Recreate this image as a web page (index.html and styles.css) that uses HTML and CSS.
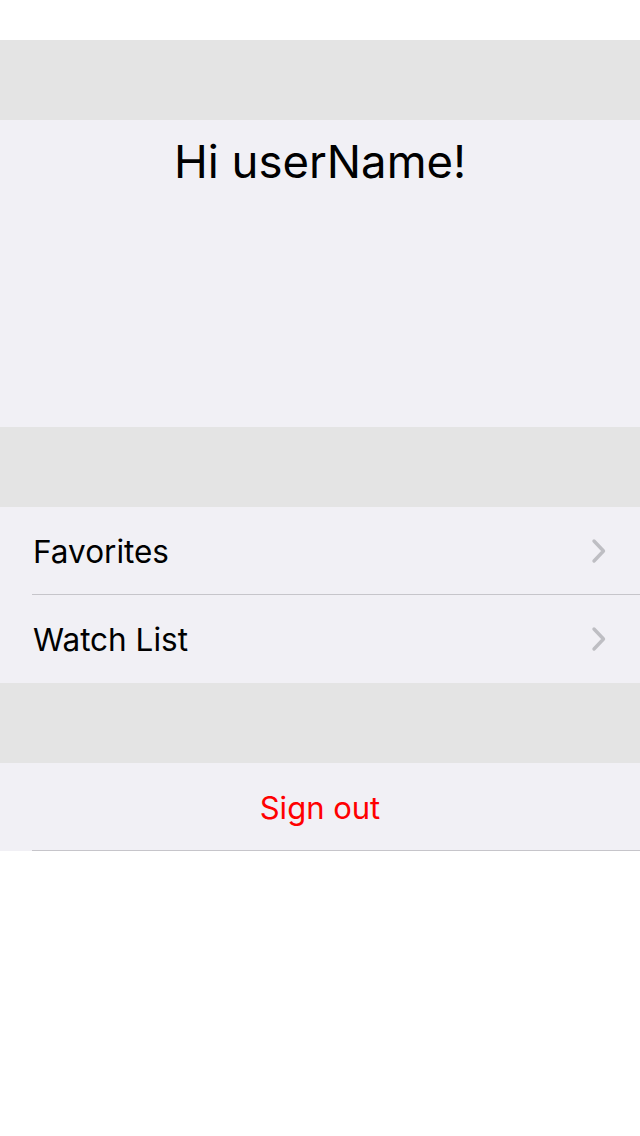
FILE: index.html
```html
<!DOCTYPE html>
<html>
<head>
<meta charset="utf-8">
<link rel="stylesheet" href="styles.css">
</head>
<body>
<div class="page">
  <div class="status"></div>
  <div class="spacer"></div>
  <div class="header">
    <h1 class="greeting">Hi userName!</h1>
  </div>
  <div class="spacer"></div>
  <div class="section">
    <div class="row sep">
      <span class="label">Favorites</span>
      <svg class="chev" width="16" height="26" viewBox="0 0 16 26"><path d="M3 3 L12.5 13 L3 23" fill="none" stroke="#bebec3" stroke-width="3.4" stroke-linecap="round" stroke-linejoin="round"/></svg>
    </div>
    <div class="row">
      <span class="label">Watch List</span>
      <svg class="chev" width="16" height="26" viewBox="0 0 16 26"><path d="M3 3 L12.5 13 L3 23" fill="none" stroke="#bebec3" stroke-width="3.4" stroke-linecap="round" stroke-linejoin="round"/></svg>
    </div>
  </div>
  <div class="spacer"></div>
  <div class="section">
    <div class="row sep center">
      <span class="signout">Sign out</span>
    </div>
  </div>
</div>
</body>
</html>
```
FILE: styles.css
```css
html, body {
  margin: 0;
  padding: 0;
  background: #ffffff;
}
.page {
  width: 640px;
  font-family: Inter, "Liberation Sans", sans-serif;
}
.status {
  height: 40px;
  background: #ffffff;
}
.spacer {
  height: 80px;
  background: #e4e4e4;
}
.header {
  height: 307px;
  background: #f1f0f5;
  display: flex;
  justify-content: center;
}
.greeting {
  margin: 0;
  padding-top: 14px;
  font-size: 45.5px;
  font-weight: 400;
  color: #000;
  line-height: 56px;
}
.section {
  background: #f1f0f5;
}
.row {
  height: 88px;
  display: flex;
  align-items: center;
  justify-content: space-between;
  padding: 0 33px 0 33px;
  position: relative;
  box-sizing: border-box;
}
.row.sep::after {
  content: "";
  position: absolute;
  left: 32px;
  right: 0;
  bottom: 0;
  height: 1px;
  background: #c6c5ca;
}
.row.center {
  justify-content: center;
}
.label {
  font-size: 31.5px;
  color: #000;
}
.signout {
  font-size: 31px;
  color: #ff0000;
}
.chev {
  display: block;
}
```
